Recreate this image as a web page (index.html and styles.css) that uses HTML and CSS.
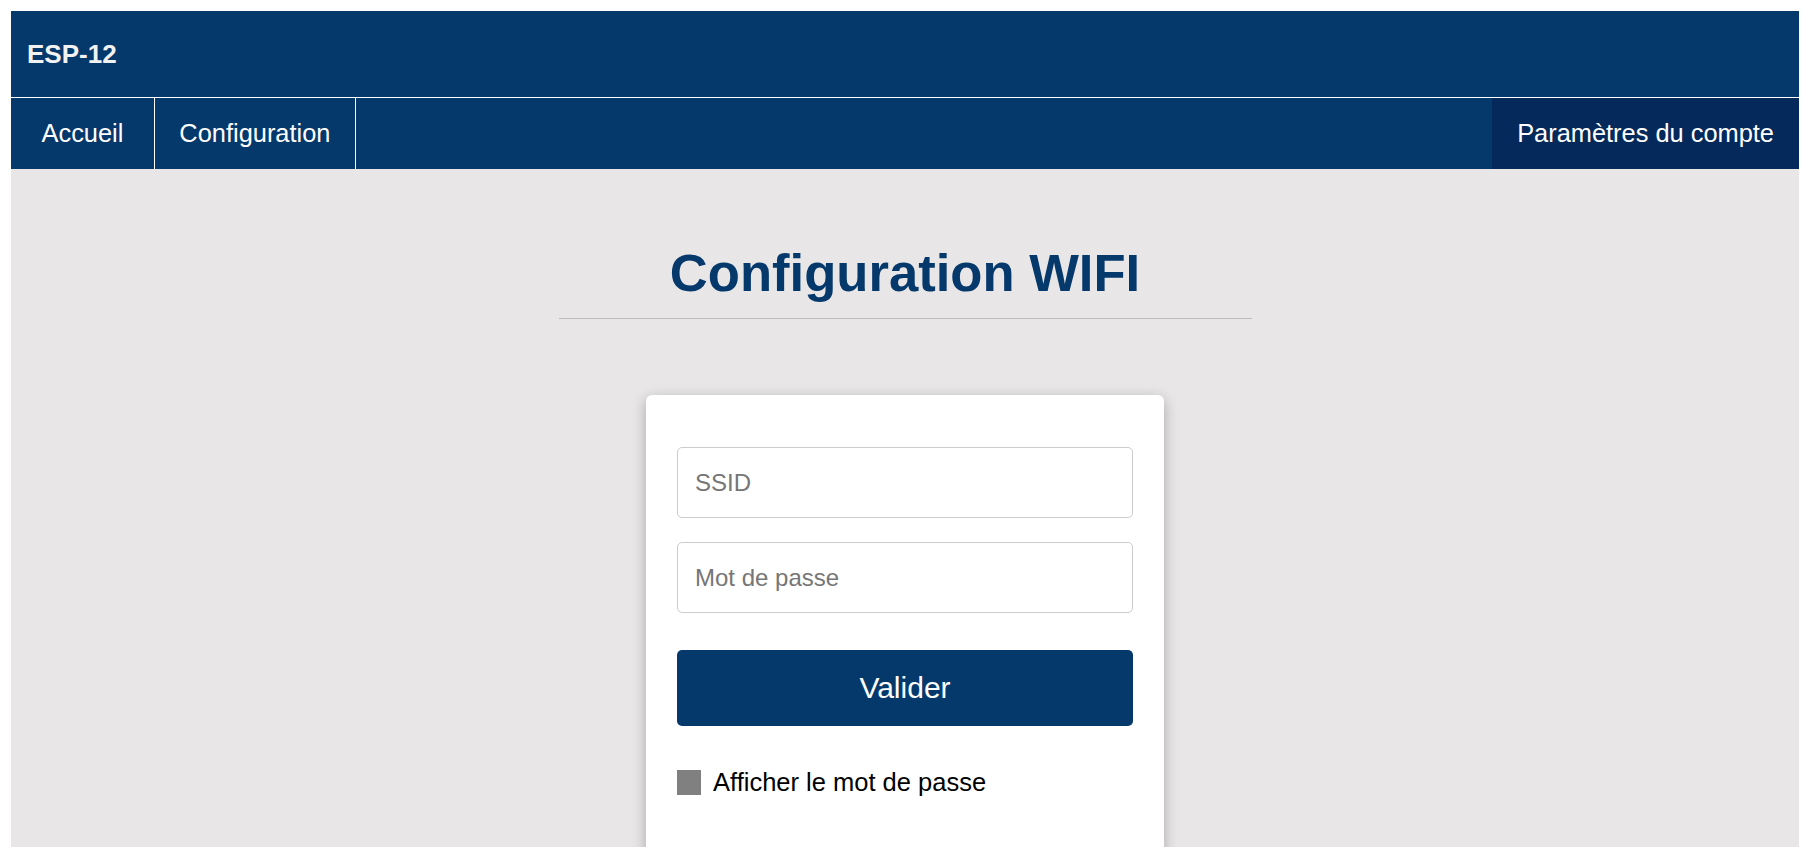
FILE: index.html
```html
<!DOCTYPE html>
<html lang="fr">
<head>
<meta charset="utf-8">
<title>ESP-12 - Configuration WIFI</title>
<link rel="stylesheet" href="styles.css">
</head>
<body>
<header class="topbar">
  <div class="brand">ESP-12</div>
</header>
<nav class="nav">
  <a class="nav-item nav-home" href="#">Accueil</a>
  <a class="nav-item nav-config" href="#">Configuration</a>
  <span class="nav-spacer"></span>
  <a class="nav-item nav-account" href="#">Paramètres du compte</a>
</nav>
<main class="main">
  <h1 class="title">Configuration WIFI</h1>
  <hr class="title-rule">
  <form class="card">
    <input class="field" type="text" placeholder="SSID">
    <input class="field" type="password" placeholder="Mot de passe">
    <button class="submit" type="button">Valider</button>
    <label class="show-pass">
      <input class="check" type="checkbox">
      <span>Afficher le mot de passe</span>
    </label>
  </form>
</main>
</body>
</html>
```
FILE: styles.css
```css
* {
  box-sizing: border-box;
}

html, body {
  height: 100%;
}

body {
  margin: 11px 10px 0 11px;
  font-family: "Liberation Sans", Arial, sans-serif;
  background: #ffffff;
  display: flex;
  flex-direction: column;
}

.topbar {
  background: #05386b;
  height: 87px;
  display: flex;
  align-items: center;
  padding-left: 16px;
  border-bottom: 1px solid #ffffff;
}

.brand {
  color: #f2f2f2;
  font-weight: bold;
  font-size: 26px;
}

.nav {
  background: #05386b;
  height: 71px;
  display: flex;
  align-items: stretch;
}

.nav-item {
  display: flex;
  align-items: center;
  padding: 0 25px;
  color: #ffffff;
  font-size: 25.4px;
  text-decoration: none;
  border-right: 1px solid #ffffff;
}

.nav-home {
  padding: 0 30.5px;
}

.nav-config {
  padding: 0 24.5px;
}

.nav-spacer {
  flex: 1;
}

.nav-account {
  border-right: none;
  background: #04295a;
}

.main {
  flex: 1;
  background: #e8e6e7;
  display: flex;
  flex-direction: column;
  align-items: center;
  padding-top: 74px;
  overflow: hidden;
}

.title {
  margin: 0;
  font-size: 52.6px;
  line-height: 60px;
  font-weight: bold;
  color: #05386b;
}

.title-rule {
  width: 693px;
  margin: 15px 0 0;
  border: none;
  border-top: 1px solid #bdbbbc;
}

.card {
  margin-top: 76px;
  width: 518px;
  background: #ffffff;
  border-radius: 6px;
  box-shadow: 0 4px 14px rgba(0, 0, 0, 0.28);
  padding: 52px 31px 120px;
  display: flex;
  flex-direction: column;
}

.field {
  height: 71px;
  width: 100%;
  border: 1px solid #cccccc;
  border-radius: 5px;
  padding: 0 17px;
  font-family: "Liberation Sans", Arial, sans-serif;
  font-size: 24px;
  color: #333333;
  background: #ffffff;
  margin: 0 0 24px;
}

.field::placeholder {
  color: #767676;
}

.field + .field {
  margin-bottom: 37px;
}

.submit {
  height: 76px;
  width: 100%;
  border: none;
  border-radius: 5px;
  background: #05386b;
  color: #ffffff;
  font-family: "Liberation Sans", Arial, sans-serif;
  font-size: 30px;
  cursor: pointer;
}

.show-pass {
  margin-top: 42px;
  display: flex;
  align-items: center;
  gap: 12px;
  font-size: 25.5px;
  color: #000000;
}

.check {
  appearance: none;
  -webkit-appearance: none;
  margin: 0;
  width: 24px;
  height: 25px;
  background: #808080;
  border: none;
  border-radius: 0;
}
```
